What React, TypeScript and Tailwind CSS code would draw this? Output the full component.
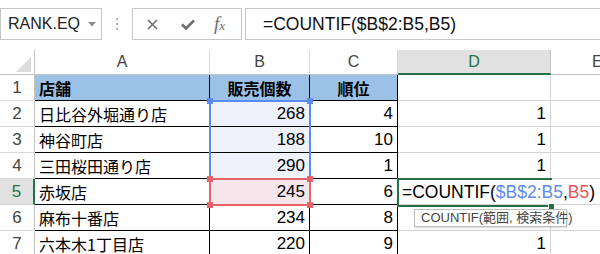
import React from "react";

type Row = { n: number; a: string; b: string; c: string; d: string };

const rows: Row[] = [
  { n: 1, a: "店舗", b: "販売個数", c: "順位", d: "" },
  { n: 2, a: "日比谷外堀通り店", b: "268", c: "4", d: "1" },
  { n: 3, a: "神谷町店", b: "188", c: "10", d: "1" },
  { n: 4, a: "三田桜田通り店", b: "290", c: "1", d: "1" },
  { n: 5, a: "赤坂店", b: "245", c: "6", d: "F" },
  { n: 6, a: "麻布十番店", b: "234", c: "8", d: "" },
  { n: 7, a: "六本木1丁目店", b: "220", c: "9", d: "1" },
];

const Handle = ({ x, y, color }: { x: number; y: number; color: string }) => (
  <div
    className="absolute w-[6px] h-[6px]"
    style={{ left: x - 3, top: y - 3, backgroundColor: color }}
  />
);

export default function App() {
  return (
    <div className="relative w-[600px] h-[254px] overflow-hidden bg-white text-black font-['Liberation_Sans','Noto_Sans_CJK_JP',sans-serif]">
      {/* toolbar */}
      <div className="h-[50px] flex items-start pt-[8px]">
        <div className="w-[102px] h-[32px] border border-[#c6c6c6] flex items-center pl-[7px] text-[16px] text-[#222] relative">
          RANK.EQ
          <svg className="absolute left-[87px] top-[13px]" width="8" height="5" viewBox="0 0 8 5">
            <polygon points="0,0 8,0 4,4.5" fill="#8a8a8a" />
          </svg>
        </div>
        <div className="w-[30px] h-[32px] flex flex-col items-center justify-center gap-[3px]">
          <div className="w-[2px] h-[2px] bg-[#b5b5b5]" />
          <div className="w-[2px] h-[2px] bg-[#b5b5b5]" />
          <div className="w-[2px] h-[2px] bg-[#b5b5b5]" />
        </div>
        <div className="w-[110px] h-[32px] border border-[#c6c6c6] flex items-center relative">
          <svg className="absolute left-[14px] top-[10px]" width="11" height="11" viewBox="0 0 11 11">
            <path d="M1 1 L10 10 M10 1 L1 10" stroke="#6e6e6e" strokeWidth="1.6" />
          </svg>
          <svg className="absolute left-[48px] top-[10px]" width="14" height="11" viewBox="0 0 14 11">
            <path d="M1 5.5 L5 9.5 L13 1.5" stroke="#6e6e6e" strokeWidth="2.6" fill="none" />
          </svg>
          <span className="absolute left-[81px] top-[3px] text-[19px] italic text-[#6e6e6e] font-['Liberation_Serif',serif] leading-[24px]">
            f<span className="text-[13px]">x</span>
          </span>
        </div>
        <div className="ml-[3px] flex-1 h-[32px] border border-r-0 border-[#c6c6c6] flex items-center pl-[17px] text-[17.5px] text-[#111]">
          =COUNTIF($B$2:B5,B5)
        </div>
      </div>

      {/* grid */}
      <div className="grid grid-cols-[35px_175px_100px_88px_153px_49px] grid-rows-[25px_26px_26px_26px_26px_26px_26px_26px] text-[17px]">
        {/* header row */}
        <div className="relative border-r border-b border-[#c4c4c4] bg-white">
          <svg className="absolute left-[14px] top-[7px]" width="18" height="16" viewBox="0 0 18 16">
            <polygon points="17,0 17,15 2,15" fill="#dcdcdc" />
          </svg>
        </div>
        <div className="border-r border-r-[#d8d8d8] border-b border-b-[#c4c4c4] flex items-center justify-center text-[16px] text-[#444]">A</div>
        <div className="border-r border-r-[#d8d8d8] border-b border-b-[#c4c4c4] flex items-center justify-center text-[16px] text-[#444]">B</div>
        <div className="border-r border-r-[#d8d8d8] border-b border-b-[#c4c4c4] flex items-center justify-center text-[16px] text-[#444]">C</div>
        <div className="border-r border-r-[#c4c4c4] border-b-2 border-b-[#217346] bg-[#e1e1e1] flex items-center justify-center text-[16px] text-[#217346]">D</div>
        <div className="border-b border-b-[#c4c4c4] flex items-center pl-[41px] text-[16px] text-[#444]">E</div>

        {rows.map((r) => {
          const head = r.n === 1;
          const active = r.n === 5;
          const bFill = r.n >= 2 && r.n <= 4 ? "bg-[#eef2fc]" : r.n === 5 ? "bg-[#f4e6eb]" : head ? "bg-[#9bc2e6]" : "";
          return (
            <React.Fragment key={r.n}>
              <div
                className={
                  active
                    ? "border-r-2 border-r-[#217346] border-b border-b-[#d4d4d4] bg-[#e1e1e1] flex items-center justify-center text-[#217346]"
                    : "border-r border-r-[#c4c4c4] border-b border-b-[#d8d8d8] flex items-center justify-center text-[#444]"
                }
              >
                {r.n}
              </div>
              <div
                className={`border-r border-b border-black flex items-center pl-[4px] text-[16px] font-['Noto_Sans_CJK_JP',sans-serif] ${
                  head ? "bg-[#9bc2e6] font-semibold" : ""
                }`}
              >
                {r.a}
              </div>
              <div
                className={`border-r border-b border-black flex items-center ${bFill} ${
                  head ? "justify-center text-[16px] font-semibold font-['Noto_Sans_CJK_JP',sans-serif]" : "justify-end pr-[4px]"
                }`}
              >
                {r.b}
              </div>
              <div
                className={`border-r border-b border-black flex items-center ${
                  head ? "bg-[#9bc2e6] justify-center text-[16px] font-semibold font-['Noto_Sans_CJK_JP',sans-serif]" : "justify-end pr-[4px]"
                }`}
              >
                {r.c}
              </div>
              <div className="border-r border-b border-[#d4d4d4] flex items-center justify-end pr-[4px] overflow-visible relative">
                {r.d === "F" ? (
                  <span className="absolute left-[4px] top-[2px] z-20 whitespace-nowrap bg-white text-[17.5px] leading-[22px] pr-[1px]">
                    =COUNTIF(<span className="text-[#5b8bee]">$B$2:B5</span>,<span className="text-[#e8555c]">B5</span>)
                  </span>
                ) : (
                  r.d
                )}
              </div>
              <div className="border-b border-[#d4d4d4]" />
            </React.Fragment>
          );
        })}
      </div>

      {/* reference range overlays */}
      <div className="absolute left-[209px] top-[100px] w-[102px] h-[80px] border-2 border-b-0 border-[#5b8bee] pointer-events-none" />
      <div className="absolute left-[209px] top-[178px] w-[102px] h-[28px] border-2 border-[#e5656b] pointer-events-none" />
      <Handle x={210} y={101} color="#5b8bee" />
      <Handle x={310} y={101} color="#5b8bee" />
      <Handle x={210} y={179} color="#e5656b" />
      <Handle x={310} y={179} color="#e5656b" />
      <Handle x={210} y={205} color="#e5656b" />
      <Handle x={310} y={205} color="#e5656b" />

      {/* active cell */}
      <div className="absolute left-[397px] top-[178px] w-[155px] h-[29px] border-2 border-r-0 border-[#217346] z-10 pointer-events-none" />
      <div className="absolute left-[548px] top-[203px] w-[7px] h-[7px] bg-[#217346] border border-white z-10" />

      {/* tooltip */}
      <div className="absolute left-[414px] top-[209px] w-[153px] h-[18px] bg-white border border-[#bdbdbd] shadow-[1px_1px_2px_rgba(0,0,0,0.15)] z-30 flex items-center pl-[6px] text-[13px] text-[#444] whitespace-nowrap font-['Liberation_Sans','Noto_Sans_CJK_JP',sans-serif]">
        COUNTIF(範囲, 検索条件)
      </div>
    </div>
  );
}
